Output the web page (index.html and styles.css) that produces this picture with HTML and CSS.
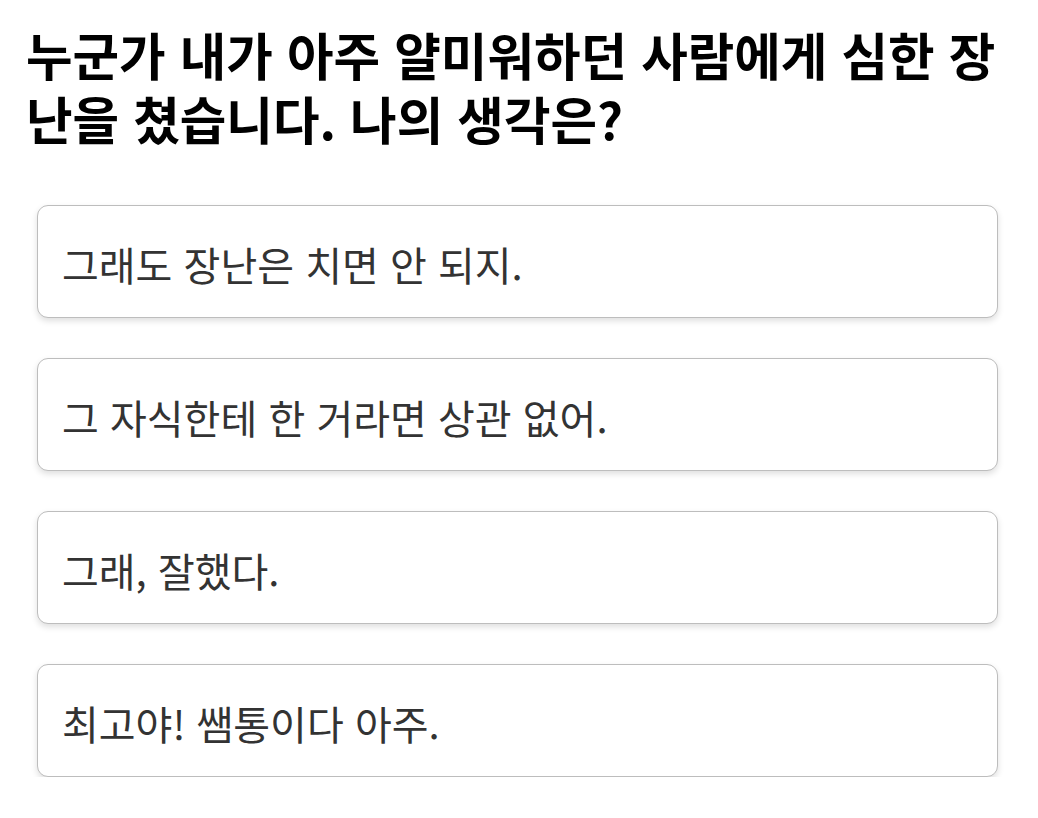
FILE: index.html
```html
<!DOCTYPE html>
<html lang="ko">
<head>
<meta charset="utf-8">
<link rel="stylesheet" href="styles.css">
</head>
<body>
<main class="quiz">
  <h1 class="question">누군가 내가 아주 얄미워하던 사람에게 심한 장난을 쳤습니다. 나의 생각은?</h1>
  <div class="options">
    <button class="option">그래도 장난은 치면 안 되지.</button>
    <button class="option">그 자식한테 한 거라면 상관 없어.</button>
    <button class="option">그래, 잘했다.</button>
    <button class="option">최고야! 쌤통이다 아주.</button>
  </div>
</main>
</body>
</html>
```

FILE: styles.css
```css
html, body {
  margin: 0;
  padding: 0;
  background: #ffffff;
}
body {
  font-family: "Noto Sans CJK KR", "Noto Sans", sans-serif;
}
.quiz {
  padding: 22px 40px 0 26px;
}
.question {
  margin: 0;
  font-size: 50.6px;
  line-height: 64px;
  font-weight: 700;
  color: #000;
}
.options {
  display: flex;
  flex-direction: column;
  gap: 40px;
  margin-top: 55px;
  padding-left: 11px;
}
.option {
  display: block;
  width: 100%;
  height: 113px;
  box-sizing: border-box;
  text-align: left;
  padding: 4px 24px 0;
  font-family: inherit;
  font-size: 40px;
  color: #333;
  background: #fff;
  border: 1.5px solid #bdbdbd;
  border-radius: 11px;
  box-shadow: 0 3px 6px rgba(0,0,0,0.13);
}
```
